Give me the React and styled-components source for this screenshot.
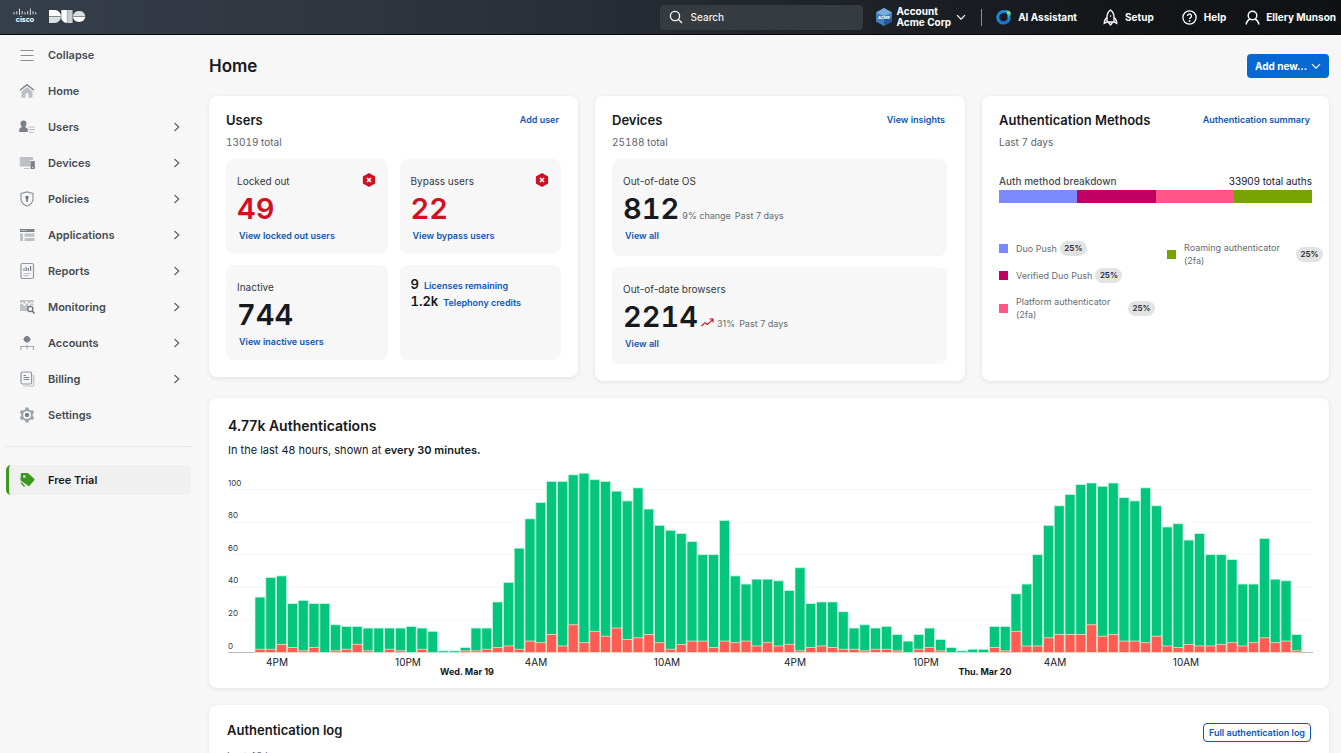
import React from "react";
import styled, { createGlobalStyle } from "styled-components";

const GlobalStyle = createGlobalStyle`
  * {
    box-sizing: border-box;
  }
  body {
    margin: 0;
    background: #f7f7f7;
    color: #16191d;
    font-family: Inter, "Liberation Sans", sans-serif;
    font-size: 11px;
    line-height: 16px;
  }
  a {
    text-decoration: none;
  }
  button, input {
    font-family: inherit;
  }
`;

/* ---------- top bar ---------- */

const TopBar = styled.header`
  display: flex;
  align-items: center;
  height: 35px;
  padding: 0 5px 0 13px;
  border-bottom: 1px solid #08090b;
  background: linear-gradient(90deg, #363e4a 0%, #2b323a 35%, #20252a 60%, #131518 85%, #101113 100%);
  color: white;
`;

const Brand = styled.a`
  display: flex;
  align-items: center;
  gap: 12px;
  flex: 1;
  padding-bottom: 2px;
  color: white;
`;

const SearchBox = styled.label`
  display: flex;
  align-items: center;
  gap: 8px;
  width: 203px;
  height: 25px;
  padding: 0 9px;
  border-radius: 4px;
  background: #353b3f;
`;

const SearchInput = styled.input`
  flex: 1;
  min-width: 0;
  padding: 0;
  border: 0;
  outline: 0;
  background: transparent;
  color: white;
  font-size: 10px;
  font-weight: 500;
  &::placeholder {
    color: #f1f2f3;
    opacity: 1;
  }
`;

const TopButton = styled.button`
  display: flex;
  align-items: center;
  gap: ${props => props.$gap || "7px"};
  margin-left: ${props => props.$space};
  padding: 0;
  border: 0;
  background: transparent;
  color: white;
  font-size: 10px;
  font-weight: 700;
  line-height: 11px;
  text-align: left;
  white-space: nowrap;
`;

const Divider = styled.span`
  width: 1px;
  height: 17px;
  margin-left: 15px;
  background: #8d9196;
`;

/* ---------- side navigation ---------- */

const Body = styled.div`
  display: flex;
  align-items: flex-start;
`;

const Sidebar = styled.nav`
  flex: none;
  width: 197px;
  padding: 2px 6px 0;
`;

const NavList = styled.ul`
  margin: 0;
  padding: 0 0 13px;
  border-bottom: 1px solid #e3e4e6;
  list-style: none;
`;

const NavItem = styled.a`
  display: flex;
  align-items: center;
  gap: 12px;
  height: 36px;
  padding: 0 10px 0 12px;
  color: #464c54;
  font-weight: 600;
  span {
    flex: 1;
  }
`;

const TrialLink = styled(NavItem)`
  height: 30px;
  margin-top: 18px;
  padding-left: 9px;
  border-left: 3px solid #3a9a1c;
  border-radius: 5px;
  background: #f0f0f1;
  color: #16191d;
`;

/* ---------- page ---------- */

const Main = styled.main`
  flex: 1;
  min-width: 0;
  padding: 19px 12px 0;
`;

const PageHead = styled.div`
  display: flex;
  align-items: center;
  justify-content: space-between;
  height: 24px;
  margin-bottom: 18px;
`;

const PageTitle = styled.h1`
  margin: 0;
  font-size: 17px;
  font-weight: 600;
  line-height: 24px;
`;

const AddButton = styled.button`
  display: flex;
  align-items: center;
  gap: 4px;
  height: 24px;
  padding: 0 8px;
  border: 0;
  border-radius: 4px;
  background: #0668d3;
  color: white;
  font-size: 10px;
  font-weight: 700;
`;

const CardGrid = styled.div`
  display: grid;
  grid-template-columns: 369fr 370fr 347fr;
  gap: 17px;
`;

const Card = styled.section`
  align-self: ${props => props.$align || "stretch"};
  min-width: 0;
  padding: ${props => props.$padding || "14px 17px 17px"};
  border-radius: 8px;
  background: white;
  box-shadow: 0 1px 5px rgba(0, 0, 0, 0.09);
`;

const WideCard = styled(Card)`
  margin-top: 17px;
`;

const CardHead = styled.div`
  display: flex;
  align-items: center;
  justify-content: space-between;
  height: 20px;
  padding-right: 2px;
`;

const CardTitle = styled.h2`
  margin: 0;
  font-size: ${props => props.$size || "13px"};
  font-weight: 600;
  line-height: 20px;
  white-space: nowrap;
`;

const Muted = styled.p`
  margin: ${props => props.$margin || "4px 0 9px"};
  color: #5c636b;
  font-size: 10px;
  font-variant-numeric: tabular-nums;
`;

const TextLink = styled.a`
  color: #0a57b5;
  font-size: 9px;
  font-weight: 600;
  line-height: 12px;
  white-space: nowrap;
`;

const Tiles = styled.div`
  display: grid;
  grid-template-columns: ${props => props.$columns || "1fr"};
  gap: 11px 12px;
`;

const Tile = styled.div`
  height: ${props => props.$height || "95px"};
  padding: 14px 12px 0 11px;
  border-radius: 8px;
  background: #f7f7f7;
`;

const TileHead = styled.div`
  display: flex;
  align-items: flex-start;
  justify-content: space-between;
  height: 16px;
  color: #32373d;
  font-size: 10px;
`;

const FigureRow = styled.div`
  display: flex;
  align-items: baseline;
  gap: 3px;
  height: 30px;
  margin: 5px 0 6px;
`;

const Figure = styled.strong`
  color: ${props => props.$color || "#16191d"};
  font-size: 29px;
  font-weight: 600;
  font-variant-numeric: tabular-nums;
  line-height: 30px;
`;

const Note = styled.span`
  margin-right: 1px;
  color: #666c73;
  font-size: 9px;
`;

const TileLink = styled(TextLink)`
  display: block;
  margin-left: 2px;
`;

const CountTile = styled(Tile)`
  padding: 11px 11px 0;
`;

const CountRow = styled.div`
  display: flex;
  align-items: baseline;
  gap: 5px;
  height: 17px;
  line-height: 17px;
  strong {
    font-size: 13px;
    font-weight: 600;
    font-variant-numeric: tabular-nums;
  }
`;

/* ---------- authentication methods ---------- */

const BreakdownHead = styled.div`
  display: flex;
  justify-content: space-between;
  margin-top: 23px;
  margin-bottom: 1px;
  color: #16191d;
  font-size: 10px;
  white-space: nowrap;
  span:first-child {
    color: #464c54;
    font-weight: 500;
  }
`;

const StackBar = styled.div`
  display: flex;
  height: 13px;
`;

const StackPart = styled.span`
  flex: 1;
  background: ${props => props.$color};
`;

const Legend = styled.div`
  display: grid;
  grid-template-columns: 1fr 1fr;
  gap: 12px;
  margin: 38px -11px 0 0;
`;

const LegendColumn = styled.ul`
  display: flex;
  flex-direction: column;
  gap: 12px;
  margin: 0;
  padding: 0;
  list-style: none;
`;

const LegendItem = styled.li`
  display: flex;
  align-items: center;
  color: #666c73;
  font-size: 9px;
  line-height: 13px;
`;

const Swatch = styled.i`
  flex: none;
  width: 9px;
  height: 9px;
  margin-right: 8px;
  background: ${props => props.$color};
`;

const Pill = styled.span`
  flex: none;
  width: 27px;
  margin-left: 3px;
  border-radius: 8px;
  background: #e1e3e5;
  color: #24282d;
  font-size: 8px;
  font-weight: 600;
  line-height: 15px;
  text-align: center;
`;

/* ---------- chart ---------- */

const Lead = styled.p`
  margin: 6px 0 4px;
  font-size: 11px;
  b {
    font-weight: 600;
  }
`;

const Chart = styled.svg`
  display: block;
  width: 100%;
  height: auto;
`;

const OutlineButton = styled.button`
  height: 19px;
  margin-top: 4px;
  padding: 0 5px;
  border: 1px solid #0a57b5;
  border-radius: 4px;
  background: white;
  color: #0a57b5;
  font-size: 9px;
  font-weight: 600;
  white-space: nowrap;
`;

/* ---------- icons ---------- */

const dark = "#7b8188";
const light = "#bdc1c5";

const navIcons = {
  collapse: <path d="M2.5 4.500h13M2.5 9.500h13M2.5 14.500h13" stroke="#8a8f95" strokeWidth="1" />,
  home: (
    <>
      <path d="M9 5 3.5 9.4V15a.8.8 0 0 0 .8.8h3.2V12.500a1.500 1.500 0 0 1 3 0v3.300h3.200a.8.8 0 0 0 .8-.8V9.400z" fill={light} />
      <path d="M2 8.200 9 2.600l7 5.600" fill="none" stroke={dark} strokeWidth="1.400" />
    </>
  ),
  users: (
    <>
      <circle cx="5.500" cy="5.500" r="3" fill={dark} />
      <path d="M3.500 7h4v2.200c1.700.5 2.300 1.400 2.300 3V14H1.200v-1.800c0-1.600.6-2.500 2.300-3z" fill={dark} />
      <path d="M10.500 9H17M10.500 11.700H17M11 14.500h4.500" stroke={light} strokeWidth="1.200" />
    </>
  ),
  devices: (
    <>
      <path d="M2.500 3h12a.7.7 0 0 1 .7.7V6h-3v6.500H2.500a.7.7 0 0 1-.7-.7V3.700a.7.700 0 0 1 .7-.7zM6 14h5v1H6z" fill={light} />
      <rect x="12.500" y="7" width="4.300" height="8" rx=".6" fill={dark} />
      <circle cx="14.700" cy="13.300" r=".6" fill="white" />
    </>
  ),
  policies: (
    <>
      <path d="M9 1.800 15 3.500v5.800c0 3-2.600 5.400-6 6.900-3.400-1.500-6-3.900-6-6.900V3.500z" fill="none" stroke="#92979c" strokeWidth="1.200" />
      <path d="M9 5.800a1.700 1.700 0 0 1 .8 3.200v3H8.200V9A1.700 1.700 0 0 1 9 5.800z" fill="#6c727a" />
    </>
  ),
  applications: (
    <>
      <path d="M2 3h14.500v3H2z" fill={dark} />
      <path d="M3.300 4.500h1M5.300 4.500h1M7.300 4.500h1" stroke="white" strokeWidth=".9" />
      <path d="M2 7.500h3V15H2zM6.500 7.500h10v3.200h-10zM6.500 12h10v3h-10z" fill={light} />
    </>
  ),
  reports: (
    <>
      <rect x="3" y="1.500" width="12.500" height="15" rx="1.500" fill="none" stroke="#92979c" strokeWidth="1.200" />
      <path d="M6 9V6.500M8.200 9V5M10.400 9V6M12.600 9V4" stroke={dark} strokeWidth="1.200" />
      <path d="M5.500 11.500h7.500M5.500 13.700h5" stroke={light} strokeWidth="1.200" />
    </>
  ),
  monitoring: (
    <>
      <path d="M2 2h13.500v5.500a4 4 0 0 0-5.300 5.500H2z" fill={light} />
      <path d="m2 6 2.500-1.500 2 3 2-4 2.500 3.500 2-2.500 2.500 1" fill="none" stroke="#f7f7f7" strokeWidth="1.200" />
      <circle cx="12.300" cy="11" r="2.600" fill="none" stroke="#6c727a" strokeWidth="1.300" />
      <path d="m14.200 13 2.500 2.600" stroke="#6c727a" strokeWidth="1.500" />
    </>
  ),
  accounts: (
    <>
      <path d="m9 1.800 1.600.7 1.300 1.300.7 1.600-.7 1.400-1.300 1.300L9 8.800l-1.600-.7-1.300-1.300-.7-1.400.7-1.600 1.300-1.300z" fill={dark} />
      <path d="M9 11v4M2.800 16v-3.500h12.700V16" fill="none" stroke="#a7acb1" strokeWidth="1.200" />
    </>
  ),
  billing: (
    <>
      <path d="M5 16h9.300a1.500 1.500 0 0 0 1.500-1.500V5" fill="none" stroke={light} strokeWidth="1.200" />
      <rect x="3" y="2" width="10.600" height="12" rx="1.500" fill="none" stroke="#92979c" strokeWidth="1.200" />
      <path d="M5.500 5.500H8M5.500 7.500h5.700M5.500 9.500h5.700" stroke={dark} strokeWidth="1.200" />
    </>
  ),
  settings: (
    <>
      <path
        d="M7.500 1.500h3l.5 2 1.700 1 2-.6 1.500 2.600-1.400 1.500v2l1.400 1.500-1.500 2.600-2-.6-1.700 1-.5 2h-3l-.5-2-1.700-1-2 .6-1.500-2.600L3.200 10V8L1.800 6.500l1.500-2.600 2 .6 1.700-1z"
        fill="#a0a5ab"
      />
      <circle cx="9" cy="9" r="3" fill={dark} stroke="white" strokeWidth="1.500" />
    </>
  ),
  trial: (
    <>
      <path d="M3.500 2.500h6l6.500 6-5.200 6L3 9z" fill="#3a9a1c" stroke="#3a9a1c" strokeWidth="1.200" strokeLinejoin="round" />
      <circle cx="6.300" cy="5.500" r="1.200" fill="#f0f0f1" />
      <path d="m3 11.500 3.500 4" stroke="#3a9a1c" strokeWidth="1.400" />
    </>
  )
};

const NavIcon = ({ name }) => (
  <svg width="18" height="18" viewBox="0 0 18 18" aria-hidden="true">
    {navIcons[name]}
  </svg>
);

const ChevronRight = () => (
  <svg width="8" height="10" viewBox="0 0 8 10" aria-hidden="true">
    <path d="m1.500 1 4.300 4-4.300 4" fill="none" stroke="#5c636b" strokeWidth="1.200" />
  </svg>
);

const ChevronDown = () => (
  <svg width="10" height="7" viewBox="0 0 10 7" aria-hidden="true">
    <path d="m1 1.200 4 4 4-4" fill="none" stroke="white" strokeWidth="1.200" />
  </svg>
);

const CiscoLogo = () => (
  <svg width="24" height="16" viewBox="0 0 24 16" aria-hidden="true">
    <path
      d="M1 4.500v1.500M3.800 3.500v2.500M6.500 1v5.500M9.200 3.500v2.500M12 4.500v1.500M14.700 3.500v2.500M17.400 1v5.500M20.100 3.500v2.500M22.800 4.500v1.500"
      stroke="#dfe2e5"
      strokeWidth="1"
      strokeLinecap="round"
    />
    <text x="12" y="14" fill="white" fontSize="7" fontWeight="700" textAnchor="middle">cisco</text>
  </svg>
);

const DuoLogo = () => (
  <svg width="37" height="13" viewBox="0 0 37 13" aria-hidden="true">
    <path d="M0 0h5.800a6.300 6.300 0 0 1 6.200 6.300H0z" fill="white" />
    <path d="M0 6.700h12A6.300 6.300 0 0 1 5.800 13H0z" fill="#dcdfe2" />
    <path d="M12.300 0h5.600v13a5.600 5.600 0 0 1-5.600-5.700z" fill="white" />
    <path d="M18.200 0h5.400v13h-5.400z" fill="#c9cdd1" />
    <path d="M23.900 6.300a6.300 6.300 0 0 1 12.400 0z" fill="#dcdfe2" />
    <path d="M23.900 6.700h12.400a6.300 6.300 0 0 1-12.400 0z" fill="white" />
  </svg>
);

const SearchIcon = () => (
  <svg width="14" height="14" viewBox="0 0 14 14" aria-hidden="true">
    <circle cx="6" cy="6" r="4.600" fill="none" stroke="white" strokeWidth="1.300" />
    <path d="m9.500 9.500 3.500 3.500" stroke="white" strokeWidth="1.300" />
  </svg>
);

const AccountIcon = () => (
  <svg width="16" height="18" viewBox="0 0 16 18" aria-hidden="true">
    <path d="m8 0 8 4.500v9L8 18l-8-4.500v-9z" fill="#3f80c0" />
    <path d="m8 0 8 4.500L8 8 0 4.500z" fill="#77addd" />
    <path d="M8 11v7l8-4.500v-4z" fill="#235b99" />
    <text x="8" y="10.500" fill="white" fontSize="4" fontWeight="700" textAnchor="middle">ACME</text>
  </svg>
);

const AssistantIcon = () => (
  <svg width="16" height="16" viewBox="0 0 16 16" aria-hidden="true">
    <path d="M9 2.700A5.800 5.800 0 1 0 13.300 8" fill="none" stroke="#1687d9" strokeWidth="3" />
    <path d="M3.500 11.500A5.800 5.800 0 0 0 12 12" fill="none" stroke="#1c6fc4" strokeWidth="2.500" />
    <path d="M8.500 2.200a3.800 3.800 0 0 1 6 4.300 3.800 3.800 0 0 1-3 2.200c.6-2.500-.6-4.800-3-6.500z" fill="#35b7d4" />
    <circle cx="12.700" cy="3.800" r="1.800" fill="#8ed36b" />
  </svg>
);

const RocketIcon = () => (
  <svg width="15" height="17" viewBox="0 0 15 17" fill="none" stroke="white" strokeWidth="1.300" aria-hidden="true">
    <path d="M7.500 1C4.700 3.200 4 5.700 4 8v5h7V8c0-2.300-.7-4.800-3.500-7z" />
    <path d="M4 8.500C2 10 1.200 11.500 1.200 14.500L4 13M11 8.500c2 1.500 2.800 3 2.800 6L11 13M5.500 13.500 7.500 16l2-2.500" />
    <circle cx="7.500" cy="7" r=".8" fill="white" stroke="none" />
  </svg>
);

const HelpIcon = () => (
  <svg width="15" height="15" viewBox="0 0 15 15" fill="none" stroke="white" strokeWidth="1.300" aria-hidden="true">
    <circle cx="7.500" cy="7.500" r="6.600" />
    <path d="M5.500 6a2 2 0 1 1 2.900 1.800c-.7.300-.9.600-.9 1.300" />
    <circle cx="7.500" cy="11" r=".9" fill="white" stroke="none" />
  </svg>
);

const UserIcon = () => (
  <svg width="15" height="15" viewBox="0 0 15 15" fill="none" stroke="white" strokeWidth="1.400" aria-hidden="true">
    <circle cx="7.500" cy="5.500" r="4.300" />
    <path d="M1 14.500c.6-2.700 1.900-4.500 4-5.300M14 14.500c-.6-2.700-1.900-4.500-4-5.300" />
  </svg>
);

const AlertBadge = () => (
  <svg width="14" height="14" viewBox="0 0 14 14" role="img" aria-label="Critical">
    <path d="M7 .8 12.400 3.900v6.200L7 13.200l-5.400-3.100V3.900z" fill="#cf1124" stroke="#cf1124" strokeWidth="1.500" strokeLinejoin="round" />
    <path d="m5 5 4 4M9 5 5 9" stroke="white" strokeWidth="1.500" />
  </svg>
);

const TrendUp = () => (
  <svg width="13" height="9" viewBox="0 0 13 9" fill="none" stroke="#cf1124" strokeWidth="1.100" aria-hidden="true">
    <path d="m.5 8 3.500-3.300 2.500 1.800L12 1.200M8.500 1H12v3.500" />
  </svg>
);

/* ---------- data ---------- */

const navItems = [
  { name: "collapse", label: "Collapse" },
  { name: "home", label: "Home" },
  { name: "users", label: "Users", nested: true },
  { name: "devices", label: "Devices", nested: true },
  { name: "policies", label: "Policies", nested: true },
  { name: "applications", label: "Applications", nested: true },
  { name: "reports", label: "Reports", nested: true },
  { name: "monitoring", label: "Monitoring", nested: true },
  { name: "accounts", label: "Accounts", nested: true },
  { name: "billing", label: "Billing", nested: true },
  { name: "settings", label: "Settings" }
];

const methods = [
  { label: "Duo Push", color: "#7b8aff" },
  { label: "Verified Duo Push", color: "#c00062" },
  { label: "Platform authenticator (2fa)", color: "#ff5588" },
  { label: "Roaming authenticator (2fa)", color: "#77a300" }
];

// one entry per half hour
const totals = [
  34, 46, 47, 30, 32, 30, 30, 17, 16, 16, 15, 15, 15, 15, 16, 15, 13, 1, 1, 3,
  15, 15, 31, 43, 64, 82, 92, 105, 105, 109, 110, 106, 105, 99, 93, 101, 88, 78, 75, 73,
  68, 60, 60, 81, 47, 42, 45, 45, 44, 38, 52, 30, 31, 31, 25, 15, 17, 15, 16, 11,
  7, 11, 15, 8, 3, 1, 2, 2, 16, 16, 36, 42, 60, 78, 90, 97, 103, 104, 102, 104,
  95, 93, 101, 90, 77, 79, 69, 73, 60, 60, 57, 42, 42, 70, 45, 44, 11
];

const failures = [
  2, 2, 5, 3, 1, 3, 0, 1, 2, 5, 1, 0, 2, 1, 0, 2, 0, 0, 0, 1,
  1, 2, 3, 4, 2, 7, 6, 11, 4, 17, 6, 13, 10, 15, 8, 9, 11, 6, 2, 5,
  7, 7, 3, 7, 6, 7, 4, 6, 4, 5, 1, 3, 4, 3, 2, 2, 1, 2, 2, 1,
  0, 2, 3, 1, 0, 0, 0, 0, 3, 1, 13, 4, 4, 9, 11, 11, 11, 17, 10, 11,
  7, 7, 6, 10, 4, 3, 5, 4, 4, 5, 6, 4, 6, 9, 6, 7, 1
];

const hours = [
  { x: 49, label: "4PM" },
  { x: 180, label: "10PM" },
  { x: 308, label: "4AM" },
  { x: 439, label: "10AM" },
  { x: 567, label: "4PM" },
  { x: 698, label: "10PM" },
  { x: 827, label: "4AM" },
  { x: 958, label: "10AM" }
];

const days = [
  { x: 239, label: "Wed. Mar 19" },
  { x: 757, label: "Thu. Mar 20" }
];

const base = 190.5;
const unit = 1.63;
const step = 10.8;

const AuthChart = () => (
  <Chart viewBox="0 0 1085 218" role="img" aria-label="Authentications per half hour">
    {[0, 20, 40, 60, 80, 100].map(value => (
      <g key={value}>
        <line
          x1="0"
          x2="1085"
          y1={base - value * unit}
          y2={base - value * unit}
          stroke={value === 0 ? "#b9bcc0" : "#f5f6f7"}
        />
        <text x="0" y={base - value * unit - 4} fontSize="8" fill="#32373d">{value}</text>
      </g>
    ))}
    {totals.map((total, i) => (
      <g key={i} stroke="#c4f5e2" strokeWidth="0.8">
        <rect x={27 + i * step} y={base - total * unit} width="10" height={total * unit} fill="#03c57c" />
        {failures[i] > 0 && (
          <rect
            x={27 + i * step}
            y={base - failures[i] * unit}
            width="10"
            height={failures[i] * unit}
            fill="#ff5c53"
            stroke="#fcdcc8"
          />
        )}
      </g>
    ))}
    {hours.map(({ x, label }) => (
      <text key={x} x={x} y="204" fontSize="10" fill="#16191d" textAnchor="middle">{label}</text>
    ))}
    {days.map(({ x, label }) => (
      <text key={x} x={x} y="213" fontSize="9" fontWeight="700" fill="#16191d" textAnchor="middle">{label}</text>
    ))}
  </Chart>
);

const LegendEntry = ({ label, color }) => (
  <LegendItem>
    <Swatch $color={color} />
    <span>{label}</span>
    <Pill>25%</Pill>
  </LegendItem>
);

const App = () => {
  return (
    <>
      <GlobalStyle />
      <TopBar>
        <Brand href="#" aria-label="Cisco Duo">
          <CiscoLogo />
          <DuoLogo />
        </Brand>
        <SearchBox>
          <SearchIcon />
          <SearchInput placeholder="Search" aria-label="Search" />
        </SearchBox>
        <TopButton $space="13px" $gap="5px">
          <AccountIcon />
          <span>Account<br />Acme Corp</span>
          <ChevronDown />
        </TopButton>
        <Divider />
        <TopButton $space="14px" $gap="6px">
          <AssistantIcon />
          AI Assistant
        </TopButton>
        <TopButton $space="26px">
          <RocketIcon />
          Setup
        </TopButton>
        <TopButton $space="28px">
          <HelpIcon />
          Help
        </TopButton>
        <TopButton $space="19px" $gap="6px">
          <UserIcon />
          Ellery Munson
        </TopButton>
      </TopBar>

      <Body>
        <Sidebar>
          <NavList>
            {navItems.map(item => (
              <li key={item.name}>
                <NavItem href="#">
                  <NavIcon name={item.name} />
                  <span>{item.label}</span>
                  {item.nested && <ChevronRight />}
                </NavItem>
              </li>
            ))}
          </NavList>
          <TrialLink href="#">
            <NavIcon name="trial" />
            <span>Free Trial</span>
          </TrialLink>
        </Sidebar>

        <Main>
          <PageHead>
            <PageTitle>Home</PageTitle>
            <AddButton>
              Add new...
              <ChevronDown />
            </AddButton>
          </PageHead>

          <CardGrid>
            <Card $align="start">
              <CardHead>
                <CardTitle>Users</CardTitle>
                <TextLink href="#">Add user</TextLink>
              </CardHead>
              <Muted>13019 total</Muted>
              <Tiles $columns="1fr 1fr">
                <Tile>
                  <TileHead>
                    Locked out
                    <AlertBadge />
                  </TileHead>
                  <FigureRow>
                    <Figure $color="#cf1124">49</Figure>
                  </FigureRow>
                  <TileLink href="#">View locked out users</TileLink>
                </Tile>
                <Tile>
                  <TileHead>
                    Bypass users
                    <AlertBadge />
                  </TileHead>
                  <FigureRow>
                    <Figure $color="#cf1124">22</Figure>
                  </FigureRow>
                  <TileLink href="#">View bypass users</TileLink>
                </Tile>
                <Tile>
                  <TileHead>Inactive</TileHead>
                  <FigureRow>
                    <Figure>744</Figure>
                  </FigureRow>
                  <TileLink href="#">View inactive users</TileLink>
                </Tile>
                <CountTile>
                  <CountRow>
                    <strong>9</strong>
                    <TextLink href="#">Licenses remaining</TextLink>
                  </CountRow>
                  <CountRow>
                    <strong>1.2k</strong>
                    <TextLink href="#">Telephony credits</TextLink>
                  </CountRow>
                </CountTile>
              </Tiles>
            </Card>

            <Card $padding="14px 18px 17px 17px">
              <CardHead>
                <CardTitle>Devices</CardTitle>
                <TextLink href="#">View insights</TextLink>
              </CardHead>
              <Muted>25188 total</Muted>
              <Tiles>
                <Tile $height="97px">
                  <TileHead>Out-of-date OS</TileHead>
                  <FigureRow>
                    <Figure>812</Figure>
                    <Note>9% change</Note>
                    <Note>Past 7 days</Note>
                  </FigureRow>
                  <TileLink href="#">View all</TileLink>
                </Tile>
                <Tile $height="97px">
                  <TileHead>Out-of-date browsers</TileHead>
                  <FigureRow>
                    <Figure>2214</Figure>
                    <TrendUp />
                    <Note>31%</Note>
                    <Note>Past 7 days</Note>
                  </FigureRow>
                  <TileLink href="#">View all</TileLink>
                </Tile>
              </Tiles>
            </Card>

            <Card>
              <CardHead>
                <CardTitle>Authentication Methods</CardTitle>
                <TextLink href="#">Authentication summary</TextLink>
              </CardHead>
              <Muted>Last 7 days</Muted>
              <BreakdownHead>
                <span>Auth method breakdown</span>
                <span>33909 total auths</span>
              </BreakdownHead>
              <StackBar>
                {methods.map(method => (
                  <StackPart key={method.label} $color={method.color} />
                ))}
              </StackBar>
              <Legend>
                <LegendColumn>
                  {methods.slice(0, 3).map(method => (
                    <LegendEntry key={method.label} {...method} />
                  ))}
                </LegendColumn>
                <LegendColumn>
                  <LegendEntry {...methods[3]} />
                </LegendColumn>
              </Legend>
            </Card>
          </CardGrid>

          <WideCard $padding="18px 16px 8px 19px">
            <CardTitle $size="14px">4.77k Authentications</CardTitle>
            <Lead>
              In the last 48 hours, shown at <b>every 30 minutes.</b>
            </Lead>
            <AuthChart />
          </WideCard>

          <WideCard $padding="15px 16px 17px 18px">
            <CardHead>
              <CardTitle>Authentication log</CardTitle>
              <OutlineButton>Full authentication log</OutlineButton>
            </CardHead>
            <Muted $margin="8px 0 9px">Last 48 hours</Muted>
          </WideCard>
        </Main>
      </Body>
    </>
  );
};

export default App;
